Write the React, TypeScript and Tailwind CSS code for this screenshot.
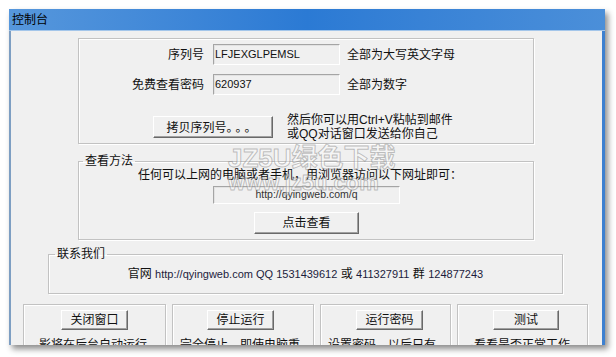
export default function App() {
  const font = "font-['Liberation_Sans','Noto_Sans_CJK_SC',sans-serif]";
  const btn =
    "flex items-center justify-center bg-[#f0f0f0] border border-t-white border-l-white border-r-[#696969] border-b-[#696969] shadow-[inset_-1px_-1px_0_#a0a0a0] text-[12px] leading-none text-[#111]";
  const group = "border border-[#c2c2c2] shadow-[inset_1px_1px_0_#fff,1px_1px_0_#fff]";
  const sunken =
    "border border-t-[#a5a5a5] border-l-[#a5a5a5] border-r-white border-b-white bg-[#f0f0f0] shadow-[inset_1px_1px_0_#e2e2e2]";

  return (
    <div className={`w-[616px] h-[357px] bg-white overflow-hidden relative text-[#111] ${font}`}>
      <div className="ml-[9px] mt-[9px] w-[596px] h-[336px] flex flex-col shadow-[3px_4px_6px_rgba(0,0,0,0.45)]">
        <div className="h-[22px] shrink-0 bg-linear-to-r from-[#5697dc] via-[#2b7ad4] to-[#4b8fd9] border-b border-[#a4c6ea] flex items-center pl-[3px] text-[12px] leading-none text-black">
          控制台
        </div>
        <div className="flex-1 flex flex-col bg-[#f0f0f0] border-l-2 border-l-[#7d9ec2] border-r-[3px] border-r-[#3d80d0] overflow-hidden text-[12px]">
          {/* top group */}
          <div className={`mt-[7px] ml-[67px] w-[456px] h-[106px] shrink-0 pt-[5px] ${group}`}>
            <div className="flex items-center h-[21px]">
              <div className="w-[125px] text-right leading-[14px]">序列号</div>
              <div className={`ml-[9px] w-[127px] h-[21px] flex items-center pl-[1px] text-[11px] ${sunken}`}>LFJEXGLPEMSL</div>
              <div className="ml-[7px] leading-[14px]">全部为大写英文字母</div>
            </div>
            <div className="flex items-center h-[21px] mt-[9px]">
              <div className="w-[125px] text-right leading-[14px]">免费查看密码</div>
              <div className={`ml-[9px] w-[127px] h-[21px] flex items-center pl-[1px] text-[11px] ${sunken}`}>620937</div>
              <div className="ml-[7px] leading-[14px]">全部为数字</div>
            </div>
            <div className="flex items-center mt-[18px]">
              <div className={`ml-[74px] w-[120px] h-[22px] font-['Noto_Sans_CJK_SC',sans-serif] ${btn}`}>
                拷贝序列号<span className="tracking-[3px]">。。。</span>
              </div>
              <div className="ml-[14px] leading-[14px]">
                <div>然后你可以用Ctrl+V粘帖到邮件</div>
                <div>或QQ对话窗口发送给你自己</div>
              </div>
            </div>
          </div>

          {/* 查看方法 */}
          <fieldset className={`mt-[10px] ml-[67px] w-[456px] shrink-0 pb-[5px] ${group}`}>
            <legend className="ml-[4px] px-[2px] leading-[14px] text-[12px]">查看方法</legend>
            <div className="pl-[59px] leading-[14px]">任何可以上网的电脑或者手机，用浏览器访问以下网址即可：</div>
            <div className={`ml-[134px] mt-[4px] w-[187px] h-[18px] flex items-center justify-center text-[10.5px] text-[#333] ${sunken}`}>
              http://qyingweb.com/q
            </div>
            <div className={`ml-[175px] mt-[8px] w-[105px] h-[22px] ${btn}`}>点击查看</div>
          </fieldset>

          {/* 联系我们 */}
          <fieldset className={`mt-[7px] ml-[37px] w-[515px] shrink-0 ${group}`}>
            <legend className="ml-[6px] px-[2px] leading-[14px] text-[12px]">联系我们</legend>
            <div className="pt-[6px] pb-[12px] text-center leading-[14px]">
              官网 <span className="text-[11px] text-[#1c1c3c]">http://qyingweb.com QQ 1531439612</span> 或{" "}
              <span className="text-[11px] text-[#1c1c3c]">411327911</span> 群{" "}
              <span className="text-[11px] text-[#1c1c3c]">124877243</span>
            </div>
          </fieldset>

          {/* bottom boxes */}
          <div className="mt-[10px] ml-[12px] flex gap-[6px] shrink-0">
            <div className={`w-[143px] h-[60px] pt-[5px] ${group}`}>
              <div className={`mx-auto w-[67px] h-[20px] ${btn}`}>关闭窗口</div>
              <div className="mt-[8px] pl-[11px] leading-[14px] whitespace-nowrap">·影将在后台自动运行</div>
            </div>
            <div className={`w-[142px] h-[60px] pt-[5px] ${group}`}>
              <div className={`ml-[34px] w-[67px] h-[20px] ${btn}`}>停止运行</div>
              <div className="mt-[8px] pl-[7px] leading-[14px] whitespace-nowrap">完全停止，即使电脑重</div>
            </div>
            <div className={`w-[131px] h-[60px] pt-[5px] ${group}`}>
              <div className={`ml-[35px] w-[67px] h-[20px] ${btn}`}>运行密码</div>
              <div className="mt-[8px] pl-[7px] leading-[14px] whitespace-nowrap">设置密码，以后只有</div>
            </div>
            <div className={`w-[131px] h-[60px] pt-[5px] ${group}`}>
              <div className={`ml-[35px] w-[66px] h-[20px] ${btn}`}>测试</div>
              <div className="mt-[8px] pl-[12px] leading-[14px] whitespace-nowrap">·看看是否正常工作</div>
            </div>
          </div>
        </div>
      </div>

      {/* watermark overlay */}
      <div className="absolute left-[228px] top-[144px] pointer-events-none select-none">
        <div className="text-[26px] leading-[28px] font-bold text-[rgba(255,255,255,0.4)] [-webkit-text-stroke:1px_rgba(120,120,120,0.45)] whitespace-nowrap">
          JZ5U绿色下载
        </div>
        <div className="text-[22px] leading-[22px] font-bold text-[rgba(255,255,255,0.4)] [-webkit-text-stroke:1px_rgba(120,120,120,0.45)] whitespace-nowrap">
          www.jz5u.com
        </div>
      </div>
    </div>
  );
}
